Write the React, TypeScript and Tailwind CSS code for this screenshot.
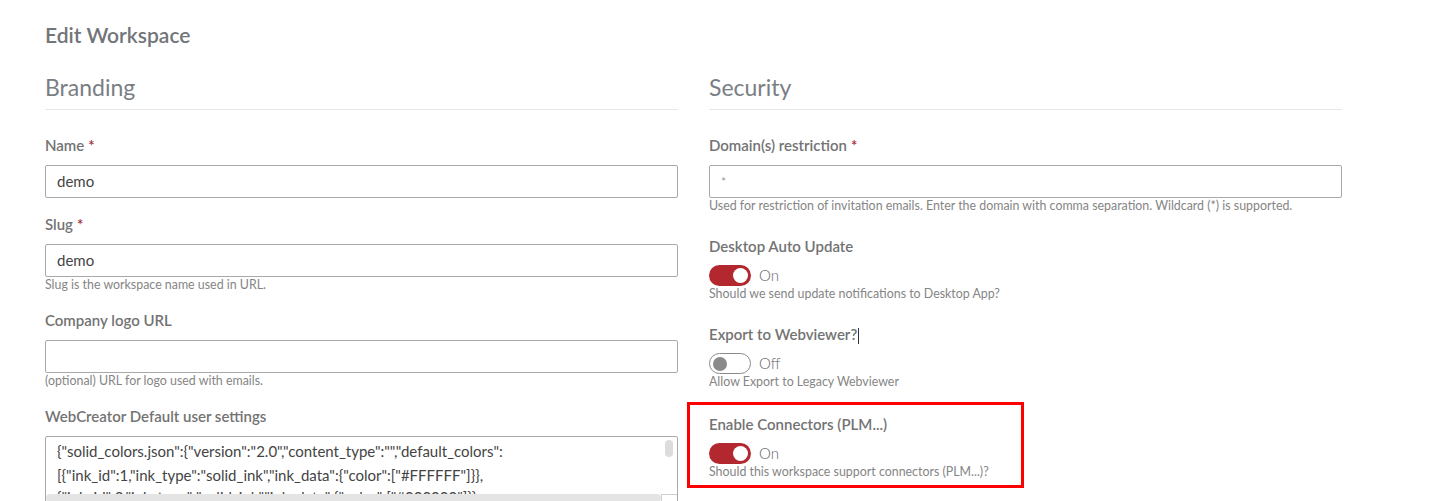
import React from "react"

const font = { fontFamily: "Lato, 'Open Sans', sans-serif" }

function Label({ text, required, caret }: { text: string; required?: boolean; caret?: boolean }) {
  return (
    <div className="h-5 text-[15px] leading-5 font-semibold text-[#737373]">
      {text}
      {caret && <span className="inline-block w-px h-[16px] bg-[#333] align-middle ml-px" />}
      {required && <span className="ml-1 text-[#a3283a]">*</span>}
    </div>
  )
}

function Help({ children }: { children: React.ReactNode }) {
  return <div className="h-4 text-[12.4px] leading-4 text-[#858585]">{children}</div>
}

function Input({ value, placeholder }: { value?: string; placeholder?: string }) {
  return (
    <div className="mt-[10px] h-[33px] border border-[#a9a9a9] rounded-[2px] px-[11px] flex items-center text-[15px] text-[#444]">
      {value ? value : <span className="text-[12px] text-[#999]">{placeholder}</span>}
    </div>
  )
}

function Toggle({ on }: { on: boolean }) {
  return (
    <div className="mt-[9px] flex items-center gap-2 h-[21px]">
      {on ? (
        <div className="w-[42px] h-[21px] rounded-full bg-[#b3272e] flex items-center justify-end pr-[3px]">
          <div className="w-[15px] h-[15px] rounded-full bg-white" />
        </div>
      ) : (
        <div className="w-[42px] h-[21px] rounded-full border-[1.5px] border-[#8a8a8a] bg-white flex items-center pl-[3px]">
          <div className="w-[14px] h-[14px] rounded-full bg-[#8a8a8a]" />
        </div>
      )}
      <span className="text-[15px] font-light text-[#666]">{on ? "On" : "Off"}</span>
    </div>
  )
}

function SectionTitle({ text }: { text: string }) {
  return (
    <div className="pt-[3px] pb-[6px] border-b border-[#e6e6e6] text-[23px] leading-8 font-normal text-[#7a7e83]">
      {text}
    </div>
  )
}

export default function App() {
  return (
    <div className="min-h-[501px] w-full bg-white overflow-hidden" style={font}>
      <div className="pl-[45px] pt-[21px]">
        <h1 className="text-[21px] leading-7 font-semibold text-[#727579]">Edit Workspace</h1>

        <div className="mt-[19px] flex gap-[31px]">
          {/* Branding */}
          <div className="w-[633px] flex flex-col">
            <SectionTitle text="Branding" />
            <div className="mt-[25px]">
              <Label text="Name" required />
              <Input value="demo" />
            </div>
            <div className="mt-4">
              <Label text="Slug" required />
              <Input value="demo" />
              <Help>Slug is the workspace name used in URL.</Help>
            </div>
            <div className="mt-[17px]">
              <Label text="Company logo URL" />
              <Input />
              <Help>(optional) URL for logo used with emails.</Help>
            </div>
            <div className="mt-[17px]">
              <Label text="WebCreator Default user settings" />
              <div className="relative mt-[10px] h-[80px] border border-[#a9a9a9] rounded-[2px] overflow-hidden">
                <div className="pl-[11px] pt-[2px] pr-5 text-[15px] leading-6 text-[#444] whitespace-nowrap">
                  <div>{'{"solid_colors.json":{"version":"2.0","content_type":"","default_colors":'}</div>
                  <div>{'[{"ink_id":1,"ink_type":"solid_ink","ink_data":{"color":["#FFFFFF"]}},'}</div>
                  <div className="-mt-[2px]">{'{"ink_id":2,"ink_type":"solid_ink","ink_data":{"color":["#000000"]}},'}</div>
                </div>
                <div className="absolute right-[4px] top-[3px] w-[8px] h-[17px] rounded-full bg-[#dcdcdc]" />
                <div className="absolute left-0 right-[16px] top-[57px] h-[8px] rounded-full bg-[#e4e4e4]" />
                <div className="absolute right-0 top-[57px] w-[16px] h-[30px] border-l border-t border-[#cfcfcf] bg-white" />
              </div>
            </div>
          </div>

          {/* Security */}
          <div className="w-[633px] flex flex-col">
            <SectionTitle text="Security" />
            <div className="mt-[25px]">
              <Label text="Domain(s) restriction" required />
              <Input placeholder="*" />
              <Help>Used for restriction of invitation emails. Enter the domain with comma separation. Wildcard (*) is supported.</Help>
            </div>
            <div className="mt-[22px]">
              <Label text="Desktop Auto Update" />
              <Toggle on />
              <Help>Should we send update notifications to Desktop App?</Help>
            </div>
            <div className="mt-[22px]">
              <Label text="Export to Webviewer?" caret />
              <Toggle on={false} />
              <Help>Allow Export to Legacy Webviewer</Help>
            </div>
            <div className="mt-[12px] -ml-[22px] w-[337px] border-[3px] border-[#ff0000] pl-[19px] pt-[9px] pb-[5px]">
              <Label text="Enable Connectors (PLM...)" />
              <Toggle on />
              <Help>Should this workspace support connectors (PLM...)?</Help>
            </div>
          </div>
        </div>
      </div>
    </div>
  )
}
